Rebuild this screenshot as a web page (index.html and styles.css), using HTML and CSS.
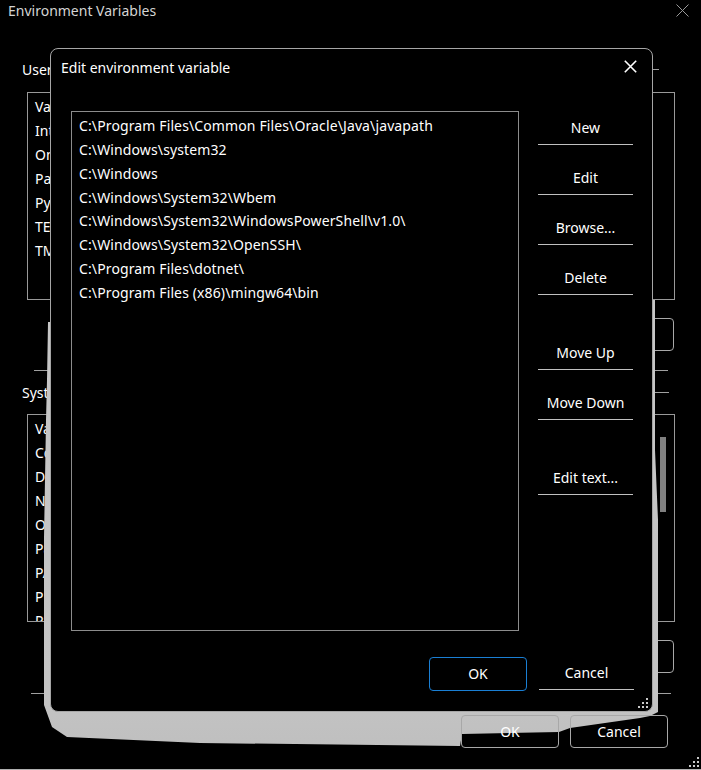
FILE: index.html
```html
<!DOCTYPE html>
<html lang="en">
<head>
<meta charset="utf-8">
<title>Edit environment variable</title>
<link rel="stylesheet" href="styles.css">
</head>
<body>
<div class="bgwin">
  <div class="bg-titlebar">
    <span class="bg-title">Environment Variables</span>
    <svg class="bg-close" width="13" height="13" viewBox="0 0 13 13"><path d="M0.5 0.5 L12.5 12.5 M12.5 0.5 L0.5 12.5" stroke="#9a9a9a" stroke-width="1" fill="none"/></svg>
  </div>
  <div class="bg-content">
    <div class="grp-head user-head"><span class="grp-label">User variables for user</span><i class="grp-line"></i></div>
    <div class="bg-list">
      <div class="bg-rows">
        <div class="bg-row">Variable</div>
        <div class="bg-row">IntelliJ IDEA Community Edition</div>
        <div class="bg-row">OneDrive</div>
        <div class="bg-row">Path</div>
        <div class="bg-row">PyCharm Community Edition</div>
        <div class="bg-row">TEMP</div>
        <div class="bg-row">TMP</div>
      </div>
    </div>
    <div class="bg-btns"><div class="bg-btn">New...</div><div class="bg-btn">Edit...</div><div class="bg-btn">Delete</div></div>
    <div class="sep sep1"></div>
    <div class="grp-head sys-head"><span class="grp-label">System variables</span><i class="grp-line"></i></div>
    <div class="bg-list sys-list">
      <div class="bg-rows">
        <div class="bg-row">Variable</div>
        <div class="bg-row">ComSpec</div>
        <div class="bg-row">DriverData</div>
        <div class="bg-row">NUMBER_OF_PROCESSORS</div>
        <div class="bg-row">OS</div>
        <div class="bg-row">Path</div>
        <div class="bg-row">PATHEXT</div>
        <div class="bg-row">PROCESSOR_ARCHITECTURE</div>
        <div class="bg-row">PSModulePath</div>
      </div>
      <div class="vscroll"><div class="thumb"></div></div>
    </div>
    <div class="bg-btns"><div class="bg-btn">New...</div><div class="bg-btn">Edit...</div><div class="bg-btn">Delete</div></div>
    <div class="sep sep2"></div>
    <div class="bg-foot"><div class="bg-btn foot-btn">OK</div><div class="bg-btn foot-btn">Cancel</div></div>
  </div>
  <div class="bg-bottom">
    <svg class="grip" width="11" height="11" viewBox="0 0 11 11"><g fill="#c8c8c8"><rect x="8" y="0" width="2" height="2"/><rect x="4" y="4" width="2" height="2"/><rect x="8" y="4" width="2" height="2"/><rect x="0" y="8" width="2" height="2"/><rect x="4" y="8" width="2" height="2"/><rect x="8" y="8" width="2" height="2"/></g></svg>
  </div>
</div>

<div class="smear"></div>

<div class="dlg">
  <div class="dlg-head">
    <span class="dlg-title">Edit environment variable</span>
    <svg class="dlg-close" width="13" height="13" viewBox="0 0 13 13"><path d="M0.8 0.8 L12.2 12.2 M12.2 0.8 L0.8 12.2" stroke="#ffffff" stroke-width="1.6" fill="none"/></svg>
  </div>
  <div class="dlg-body">
    <div class="path-list">
      <div class="path-row">C:\Program Files\Common Files\Oracle\Java\javapath</div>
      <div class="path-row">C:\Windows\system32</div>
      <div class="path-row">C:\Windows</div>
      <div class="path-row">C:\Windows\System32\Wbem</div>
      <div class="path-row">C:\Windows\System32\WindowsPowerShell\v1.0\</div>
      <div class="path-row">C:\Windows\System32\OpenSSH\</div>
      <div class="path-row">C:\Program Files\dotnet\</div>
      <div class="path-row">C:\Program Files (x86)\mingw64\bin</div>
    </div>
    <div class="side-btns">
      <div class="side-btn">New</div>
      <div class="side-btn">Edit</div>
      <div class="side-btn">Browse...</div>
      <div class="side-btn">Delete</div>
      <div class="spacer"></div>
      <div class="side-btn">Move Up</div>
      <div class="side-btn">Move Down</div>
      <div class="spacer"></div>
      <div class="side-btn">Edit text...</div>
    </div>
  </div>
  <div class="dlg-foot">
    <div class="ok-btn">OK</div>
    <div class="side-btn cancel-btn">Cancel</div>
  </div>
  <svg class="dlg-grip" width="11" height="11" viewBox="0 0 11 11"><g fill="#c8c8c8"><rect x="8" y="0" width="2" height="2"/><rect x="4" y="4" width="2" height="2"/><rect x="8" y="4" width="2" height="2"/><rect x="0" y="8" width="2" height="2"/><rect x="4" y="8" width="2" height="2"/><rect x="8" y="8" width="2" height="2"/></g></svg>
</div>
</body>
</html>
```
FILE: styles.css
```css
* { box-sizing: border-box; }
html, body { margin: 0; padding: 0; }
body {
  width: 701px;
  height: 770px;
  overflow: hidden;
  background: #000;
  color: #fff;
  font-family: "Noto Sans", "Open Sans", sans-serif;
  font-size: 14px;
  position: relative;
}

/* background window */
.bgwin { width: 701px; height: 770px; display: flex; flex-direction: column; }
.bg-titlebar {
  height: 22px;
  display: flex;
  justify-content: space-between;
  align-items: flex-start;
  padding: 0 12px 0 8px;
}
.bg-title { line-height: 22px; color: #d4d4d4; }
.bg-close { margin-top: 4px; }

.bg-content { padding: 0 26px 0 22px; display: flex; flex-direction: column; }
.grp-head { height: 20px; display: flex; align-items: center; gap: 4px; }
.user-head { margin-top: 38px; margin-right: 16px; }
.sys-head { margin-top: 12px; margin-right: 6px; }
.grp-label { line-height: 20px; white-space: nowrap; }
.grp-line { flex: 1; height: 1px; background: #a0a0a0; margin-top: -2px; }

.bg-list {
  margin: 12px 0 0 5px;
  height: 208px;
  border: 1px solid #999;
  overflow: hidden;
  display: flex;
}
.bg-rows { flex: 1; padding: 2px 0 0 7px; }
.bg-row { line-height: 24px; height: 24px; white-space: nowrap; }
.sys-list { margin-top: 11px; }
.vscroll { width: 17px; padding: 22px 0 0 3px; }
.thumb { width: 6px; height: 75px; background: #808080; }

.bg-btns {
  margin-top: 18px;
  height: 33px;
  display: flex;
  justify-content: flex-end;
  gap: 11px;
  margin-right: 1px;
}
.bg-btn {
  width: 97px;
  height: 33px;
  border: 1px solid #a8a8a8;
  border-radius: 4px;
  text-align: center;
  line-height: 31px;
}
.sep { height: 1px; background: #a0a0a0; }
.sep1 { margin: 19px 7px 0 12px; }
.sep2 { margin: 20px 4px 0 9px; }

.bg-foot {
  margin-top: 21px;
  display: flex;
  justify-content: flex-end;
  gap: 11px;
  margin-right: 7px;
  position: relative;
  z-index: 2;
}
.foot-btn { width: 98px; }

.bg-bottom {
  margin-top: auto;
  height: 15px;
  border-bottom: 1px solid #b0b0b0;
  display: flex;
  justify-content: flex-end;
  align-items: flex-start;
  padding-right: 1px;
}
.grip { margin-top: 2px; }

/* stale shadow smear left by the dialog */
.smear {
  position: absolute;
  left: 0; top: 0;
  width: 701px; height: 770px;
  background: linear-gradient(180deg, #c9c9c9 0%, #c4c4c4 90%, #bdbdbd 100%);
  z-index: 1;
  clip-path: polygon(48px 322px, 60px 322px, 640px 300px, 655px 300px, 655px 450px, 658px 520px, 658px 712px, 650px 716px, 640px 718px, 570px 728px, 559px 732px, 462px 734px, 460px 746px, 200px 743px, 67px 737px, 52px 727px, 44px 705px, 44px 538px, 46px 420px, 47px 380px);
}

/* dialog */
.dlg {
  position: absolute;
  left: 50px;
  top: 48px;
  width: 603px;
  height: 664px;
  background: #000;
  border: 1px solid #a6a6a6;
  border-radius: 8px;
  z-index: 3;
  display: flex;
  flex-direction: column;
}
.dlg-head {
  height: 62px;
  display: flex;
  justify-content: space-between;
  align-items: flex-start;
  padding: 8px 15px 0 10px;
}
.dlg-title { line-height: 22px; }
.dlg-close { margin-top: 3px; }

.dlg-body {
  height: 520px;
  display: flex;
  gap: 19px;
  padding: 0 18px 0 20px;
}
.path-list {
  width: 448px;
  height: 520px;
  border: 1px solid #8c8c8c;
  padding: 2px 0 0 7px;
}
.path-row { line-height: 23.85px; height: 23.85px; white-space: nowrap; letter-spacing: 0.12px; }

.side-btns {
  width: 95px;
  padding-top: 1px;
  display: flex;
  flex-direction: column;
  gap: 17px;
}
.side-btn {
  height: 33px;
  border-bottom: 1px solid #c0c0c0;
  text-align: center;
  line-height: 32px;
}
.spacer { height: 8px; }

.dlg-foot {
  margin-top: 26px;
  height: 34px;
  display: flex;
  justify-content: flex-end;
  gap: 12px;
  padding-right: 18px;
}
.ok-btn {
  width: 98px;
  height: 34px;
  border: 1px solid #1a7fd4;
  border-radius: 4px;
  text-align: center;
  line-height: 32px;
}
.cancel-btn { width: 95px; height: 33px; }

.dlg-grip { position: absolute; right: 3px; bottom: 2px; }
```
